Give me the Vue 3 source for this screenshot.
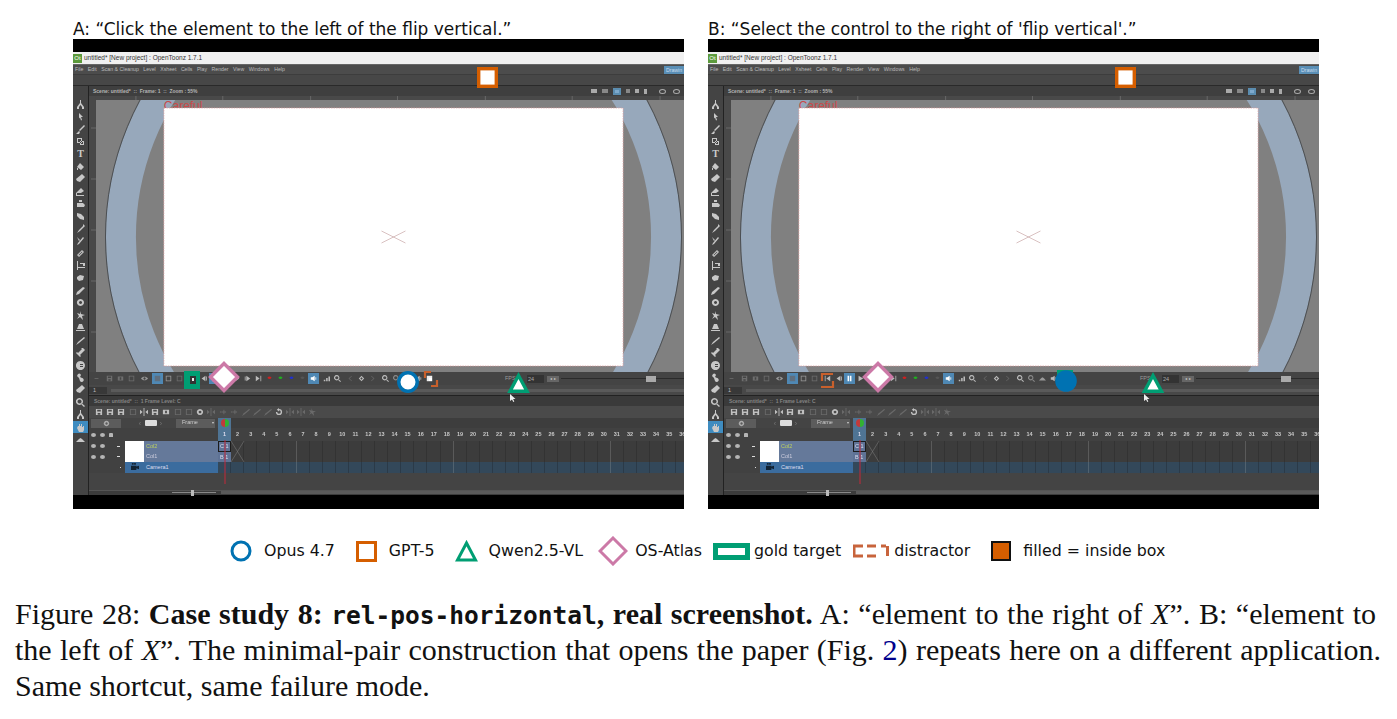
<template>
  <div class="page">
    <div class="panels">
      <section v-for="panel in panels" :key="panel.id" class="panel">
        <p class="prompt">{{ panel.prompt }}</p>
        <div class="shot">
          <div class="black top"></div>
          <div class="app">
            <div class="titlebar">
              <span class="logo">Ot</span>
              <span>untitled* [New project] : OpenToonz 1.7.1</span>
            </div>
            <div class="menubar">
              <span v-for="m in menus" :key="m">{{ m }}</span>
              <b class="room">Drawin</b>
            </div>
            <div class="toolbar"></div>
            <div class="workspace">
              <aside class="tools">
                <div v-for="(t, i) in tools" :key="i" class="tool" :class="{ on: t === 'hand' }">
                  <span v-if="t === 'T'" class="tool-t">T</span>
                  <svg v-else viewBox="0 0 9 9"><path :d="shapes[t]" fill-rule="evenodd" /></svg>
                </div>
              </aside>
              <div class="main">
                <div class="scenebar">
                  <span>Scene: untitled* &nbsp;::&nbsp; Frame: 1 &nbsp;::&nbsp; Zoom : 55%</span>
                  <div class="viewicons">
                    <i v-for="(v, i) in viewIcons" :key="i" :class="v"></i>
                  </div>
                </div>
                <div class="viewer">
                  <svg class="canvas" viewBox="88 96 596 276" preserveAspectRatio="none">
                    <rect x="88" y="96" width="596" height="276" fill="#494949" />
                    <rect x="95" y="100" width="589" height="272" fill="#808080" />
                    <circle cx="393" cy="237" r="273" fill="none" stroke="#97a8bb" stroke-width="30" />
                    <circle cx="393" cy="237" r="288.500" fill="none" stroke="#3d4248" stroke-width=".8" />
                    <rect x="88" y="96" width="7" height="276" fill="#494949" />
                    <rect x="95" y="96" width="589" height="4" fill="#494949" />
                    <path d="M135 96v4M222 96v4M310 96v4M397 96v4M485 96v4M572 96v4M660 96v4M90 128h5M90 179h5M90 230h5M90 281h5M90 332h5" stroke="#777" stroke-width=".7" />
                    <text x="163" y="110" class="safe">Careful</text>
                    <rect x="163" y="108" width="460" height="258" fill="#fff" stroke="#d99" stroke-width=".7" stroke-dasharray="1.500 1" />
                    <path d="M381 231l24 12M381 243l24-12" stroke="#c9a6a6" stroke-width=".7" />
                  </svg>
                </div>
                <div class="playbar">
                  <span v-for="(p, i) in playIcons" :key="i" class="cell" :class="{ sep: p.sep, active: p.active }">
                    <svg viewBox="0 0 9 9"><path :d="shapes[p.icon]" :fill="p.color || '#bbb'" fill-rule="evenodd" /></svg>
                  </span>
                  <span class="fps">FPS</span>
                  <span class="fpsval">24</span>
                  <span class="arrows">◂ ▸</span>
                  <span class="fpstrack"><i></i></span>
                </div>
                <div class="framebar">
                  <span class="framefield">1</span>
                  <span class="frametrack"></span>
                </div>
                <div class="xsheet">
                  <div class="xstatus">Scene: untitled* &nbsp;::&nbsp; 1 Frame Level: C</div>
                  <div class="xtools">
                    <span v-for="(x, i) in xIcons" :key="i" class="xcell" :class="{ dim: x.dim, sep: x.sep }">
                      <svg viewBox="0 0 9 9"><path :d="shapes[x.icon]" fill-rule="evenodd" /></svg>
                    </span>
                  </div>
                  <div class="hrow">
                    <div class="hleft">
                      <span class="hbtn"><svg viewBox="0 0 9 9"><path :d="shapes.gear" fill-rule="evenodd" /></svg></span>
                      <span class="chev">‹</span>
                      <span class="camadd"></span>
                      <span class="chev">›</span>
                      <span class="framemenu">Frame <em>▾</em></span>
                    </div>
                    <div class="hsel"><i></i></div>
                    <div class="hrest"></div>
                  </div>
                  <div class="nrow">
                    <div class="nleft">
                      <i class="dot"></i><i class="dot"></i><i class="lock"></i>
                    </div>
                    <div class="numbers">
                      <span v-for="n in 36" :key="n" :class="{ cur: n === 1 }">{{ n }}</span>
                    </div>
                  </div>
                  <div class="rows">
                    <div v-for="r in layers" :key="r.name" class="lrow" :class="r.kind">
                      <div class="lleft">
                        <i v-if="r.kind !== 'cam'" class="dot"></i>
                        <i v-if="r.kind !== 'cam'" class="dot"></i>
                        <i class="dash"></i>
                        <span class="thumb"><svg v-if="r.kind === 'cam'" viewBox="0 0 9 9"><path :d="shapes.cam" fill="#123" /></svg></span>
                        <span class="lname">{{ r.name }}</span>
                      </div>
                      <div class="lcells">
                        <span v-if="r.cell" class="firstcell">{{ r.cell }}&nbsp;1</span>
                      </div>
                    </div>
                    <svg class="playhead" viewBox="0 0 30 44"><path d="M13 0l13 21M26 0L13 21" stroke="#777" stroke-width=".6" transform="translate(0 1)" /><path d="M7 0v44" stroke="#c2283a" stroke-width="1" /></svg>
                  </div>
                  <div class="xgap"></div>
                  <div class="xbottom">
                    <span class="zoomtrack"><i></i></span>
                    <span class="hscroll"></span>
                  </div>
                </div>
              </div>
            </div>
          </div>
          <div class="black bottom"></div>
          <svg class="marks" :viewBox="`${panel.x} 39 611 470`">
            <template v-if="panel.id === 'a'">
              <rect x="184" y="371" width="16" height="18" fill="#009e73" />
              <rect x="190" y="376" width="6" height="8" fill="#333" />
              <rect x="192" y="378" width="2" height="3" fill="#eee" />
              <path d="M425 378v-6h6M437 380v6h-6" fill="none" stroke="#c8602c" stroke-width="2.200" />
              <rect x="429" y="378" width="3" height="3" fill="#fff" />
              <rect x="478.700" y="68.700" width="17.600" height="17.600" fill="#fff" stroke="#d55e00" stroke-width="3.400" />
              <path d="M224 363.500L237.500 377 224 390.500 210.500 377z" fill="#fff" stroke="#cc79a7" stroke-width="3.400" />
              <circle cx="408" cy="382" r="9.200" fill="#fff" stroke="#0072b2" stroke-width="3.400" />
              <path d="M518.500 375.500L527 391.300H510z" fill="#fff" stroke="#009e73" stroke-width="3.400" />
              <path d="M510 394v7l2-1.600 1.300 2.600 1-.5-1.200-2.500h2.400z" fill="#eee" />
            </template>
            <template v-else>
              <rect x="1057" y="370" width="16" height="8" fill="#009e73" />
              <path d="M822 381v-7h11M821 387h12v-6" fill="none" stroke="#c8602c" stroke-width="2.200" />
              <circle cx="1066" cy="381" r="10.800" fill="#0072b2" />
              <rect x="1116.700" y="68.700" width="17.600" height="17.600" fill="#fff" stroke="#d55e00" stroke-width="3.400" />
              <path d="M878 363.500L891.500 377 878 390.500 864.500 377z" fill="#fff" stroke="#cc79a7" stroke-width="3.400" />
              <path d="M1153 375.500L1161.500 391.300H1144.500z" fill="#fff" stroke="#009e73" stroke-width="3.400" />
              <path d="M1144 394v7l2-1.600 1.300 2.600 1-.5-1.200-2.500h2.400z" fill="#eee" />
            </template>
          </svg>
        </div>
      </section>
    </div>

    <div class="legend">
      <svg class="i-circle" viewBox="0 0 22 22"><circle cx="11" cy="11" r="9" fill="none" stroke="#0072b2" stroke-width="3" /></svg>
      <span class="l-opus">Opus 4.7</span>
      <svg class="i-square" viewBox="0 0 21 21"><rect x="1.500" y="1.500" width="18" height="18" fill="none" stroke="#d55e00" stroke-width="3" /></svg>
      <span class="l-gpt">GPT-5</span>
      <svg class="i-tri" viewBox="0 0 23 22"><path d="M11.500 3L20.500 20H2.500z" fill="none" stroke="#009e73" stroke-width="3" /></svg>
      <span class="l-qwen">Qwen2.5-VL</span>
      <svg class="i-dia" viewBox="0 0 30 30"><path d="M15 2L28 15 15 28 2 15z" fill="none" stroke="#cc79a7" stroke-width="3" /></svg>
      <span class="l-os">OS-Atlas</span>
      <svg class="i-gold" viewBox="0 0 37 17"><rect x="2.500" y="2.500" width="32" height="12" fill="#fff" stroke="#009e73" stroke-width="5" /></svg>
      <span class="l-gold">gold target</span>
      <svg class="i-dist" viewBox="0 0 36 14"><path d="M1 7V2h9M14 2h9M28 2h5M1 7v5h9M14 12h9M34.500 2v10" fill="none" stroke="#c8643c" stroke-width="3" /></svg>
      <span class="l-dist">distractor</span>
      <svg class="i-fill" viewBox="0 0 20 20"><rect x="1" y="1" width="18" height="18" fill="#d55e00" stroke="#111" stroke-width="2" /></svg>
      <span class="l-fill">filled = inside box</span>
    </div>

    <div class="caption">
      <div class="line l1">Figure 28: <b>Case study 8: <code>rel-pos-horizontal</code>, real screenshot.</b> A: “element to the right of <i>X</i>”. B: “element to</div>
      <div class="line l2">the left of <i>X</i>”. The minimal-pair construction that opens the paper (Fig. <span class="ref">2</span>) repeats here on a different application.</div>
      <div class="line l3">Same shortcut, same failure mode.</div>
    </div>
  </div>
</template>

<script setup>
const panels = [
  { id: 'a', x: 73, prompt: 'A: “Click the element to the left of the flip vertical.”' },
  { id: 'b', x: 708, prompt: "B: “Select the control to the right of 'flip vertical'.”" }
]

const menus = ['File', 'Edit', 'Scan & Cleanup', 'Level', 'Xsheet', 'Cells', 'Play', 'Render', 'View', 'Windows', 'Help']

const shapes = {
  anim: 'M4 0h1v3l3 4v2H6V7L4.500 5 3 7v2H1V7l3-4z',
  arrow: 'M3 1l4 4H5l1 3-1 .5-1-3-1 1z',
  brush: 'M8 0l1 1-5 5-1-1zM3 6l1 1-1 2H0z',
  copy: 'M1 1h5v5H1zM2 2v3h3V2zM4 4h4v4H4zM5 5v2h2V5z',
  fill: 'M4 1l4 4-3 3-4-3zM1 6h1v2H1z',
  bucket: 'M6 0l3 3-5 5-3-1-1-2z',
  eraser: 'M5 1l3 3-3 2H1v2h7v1H0V6z',
  blob: 'M1 4h6l2 2-1 2H1zM3 1h3v2H3z',
  smudge: 'M1 1l4 1 3 3v3L4 7 1 4z',
  drop: 'M7 0l2 2-1 1-4 4-3 2 2-3 4-4z',
  pick: 'M7 1l1 1-5 6-2 1 1-2zM1 1l3 3-1 1z',
  tape: 'M6 1l2 2-5 5-2-2zM6 2.500L2.500 6 3 6.500 6.500 3z',
  crop: 'M1 0h1v6h7v1H2v2H1zM4 2h5v3H7V3H4z',
  cut: 'M1 3l3-2 4 1-1 4-4 1-2-2z',
  pen: 'M7 1l2 1-6 6-3 1 1-3z',
  ring: 'M4.500 1a3.500 3.500 0 1 1-.1 0zM4.500 3a1.500 1.500 0 1 0 .1 0z',
  star: 'M4 0l1 3 4 1-3 1 1 4-3-3-3 2 2-3-2-3 3 1z',
  iron: 'M3 1h3l2 5H1zM0 7h9v1H0z',
  line: 'M8 1l1 1-6 5-3 2 2-3z',
  bone: 'M7 0l2 2-1 1-4 4 1 1-1 1-2-2L0 5l1-1 1 1 4-4-1-1z',
  swirl: 'M4.500 0a4.500 4.500 0 1 1-.1 0zM7 3H4v1h3zM7 5H4v1h3z',
  knot: 'M2 1a2 2 0 0 1 3 1l-1 2 2 1a2 2 0 1 1-2 3L3 5 1 3z',
  mag: 'M3.500 0a3.500 3.500 0 1 1-.1 0zM3.500 1.500a2 2 0 1 0 .1 0zM6 5.500l3 2.500-1 1-3-3z',
  hand: 'M2 3h1V1h1v2h1V1h1v3h1V3h1v4L7 9H3L1 5z',
  mount: 'M0 7l3-3 1.500-1L6 4l3 3z',
  bar: 'M2 4h5v1H2z',
  disk: 'M1 1h7v7H1zM2.500 2v2h4V2zM3 5.500v2h3v-2z',
  camera: 'M1 2h7v5H1zM3.500 3v3h2V3z',
  grid: 'M1 1h7v7H1zM2 2v5h5V2z',
  eye: 'M0 4.500C2 1.500 7 1.500 9 4.500 7 7.500 2 7.500 0 4.500zM4.500 3a1.500 1.500 0 1 0 .1 0z',
  solid: 'M1 1h7v7H1z',
  first: 'M1 1h1v7H1zM8 1v7L3 4.500z',
  prev: 'M7 1v7L2 4.500zM8 2h1v5H8z',
  pause: 'M2 1h2v7H2zM5 1h2v7H5z',
  play: 'M2 1l6 3.500L2 8z',
  next: 'M1 2h1v5H1zM3 1l5 3.500L3 8z',
  last: 'M1 1l5 3.500L1 8zM7 1h1v7H7z',
  dot: 'M4.500 2a2.500 1.500 0 1 1-.1 0z',
  sound: 'M1 3h2l3-2v7L3 6H1zM7 3h1v3H7z',
  bars: 'M1 6h2v2H1zM4 4h2v4H4zM7 2h2v6H7z',
  left: 'M6 1v1L3 4.500 6 7v1L2 4.500z',
  right: 'M3 1v1l3 2.500L3 7v1l4-3.500z',
  diamond: 'M4.500 1L8 4.500 4.500 8 1 4.500zM4.500 3L3 4.500 4.500 6 6 4.500z',
  gear: 'M4.500 1a3.500 3.500 0 1 1-.1 0zM4.500 3a1.500 1.500 0 1 0 .1 0z',
  plus: 'M1 4h2v1H1zM5 2h1v2h2v1H6v2H5V5H3.500V4H5z',
  undo: 'M4.500 1a3.500 3.500 0 1 1-3.500 3.500h1.500a2 2 0 1 0 2-2V4L2 2l2.500-2z',
  cam: 'M0 3h6v5H0zM6 4l3-1v4L6 6zM1 0h2v2H1zM3.500 0h2v2h-2z',
  flip: 'M4 0h1v9H4zM0 2l3 2.500L0 7zM9 2v5L6 4.500z'
}

const tools = ['anim', 'arrow', 'brush', 'copy', 'T', 'fill', 'bucket', 'eraser', 'blob', 'smudge', 'drop', 'pick', 'tape', 'crop', 'cut', 'pen', 'ring', 'star', 'iron', 'line', 'bone', 'swirl', 'knot', 'bucket', 'mag', 'anim', 'hand', 'mount']

const viewIcons = ['box', 'box dim', 'act', 'small dim', 'small', 'two', 'ring', 'ring']

const dim = '#6e6e6e'
const playIcons = [
  { icon: 'bar', color: dim },
  { icon: 'disk', color: dim, sep: true },
  { icon: 'camera', color: dim },
  { icon: 'grid', color: dim },
  { icon: 'eye', color: '#999', sep: true },
  { icon: 'solid', color: '#5f6f7f', sep: true, active: true },
  { icon: 'grid', color: '#999' },
  { icon: 'grid', color: dim },
  { icon: 'first', sep: true },
  { icon: 'prev' },
  { icon: 'pause', color: '#fff', active: true },
  { icon: 'play' },
  { icon: 'next' },
  { icon: 'next' },
  { icon: 'last' },
  { icon: 'dot', color: '#d02020' },
  { icon: 'dot', color: '#20b020' },
  { icon: 'dot', color: '#2030d0' },
  { icon: 'dot', color: '#555' },
  { icon: 'sound', color: '#fff', active: true },
  { icon: 'bars', sep: true },
  { icon: 'mag' },
  { icon: 'left', color: dim, sep: true },
  { icon: 'diamond' },
  { icon: 'right', color: dim },
  { icon: 'mag', sep: true },
  { icon: 'mag', color: '#888' },
  { icon: 'mount', color: '#999' },
  { icon: 'sound' },
  { icon: 'solid', color: '#eee' }
]

const xIcons = [
  { icon: 'disk' }, { icon: 'disk' }, { icon: 'disk' },
  { icon: 'grid', dim: true, sep: true }, { icon: 'flip' }, { icon: 'disk' }, { icon: 'camera' },
  { icon: 'grid', dim: true, sep: true }, { icon: 'grid', dim: true }, { icon: 'gear' }, { icon: 'flip', dim: true },
  { icon: 'plus', dim: true, sep: true }, { icon: 'plus', dim: true }, { icon: 'line', dim: true, sep: true },
  { icon: 'line', dim: true }, { icon: 'line', dim: true }, { icon: 'undo' }, { icon: 'flip', dim: true },
  { icon: 'flip', dim: true }, { icon: 'star', dim: true }
]

const layers = [
  { name: 'Col2', kind: 'col sel', cell: 'C' },
  { name: 'Col1', kind: 'col', cell: 'B' },
  { name: 'Camera1', kind: 'cam' }
]
</script>

<style>
html, body { background: #fff; }
</style>

<style scoped>
.page {
  width: 1397px;
  height: 719px;
  overflow: hidden;
  background: #fff;
  color: #111;
}

.panels {
  display: flex;
  gap: 24px;
  padding: 19px 0 0 73px;
}

.panel {
  width: 611px;
}

.prompt {
  margin: 0;
  height: 20px;
  font: 17px/20px "DejaVu Sans", sans-serif;
  white-space: nowrap;
}

.shot {
  position: relative;
  width: 611px;
  height: 470px;
  overflow: hidden;
  background: #000;
}

.black {
  background: #000;
}
.black.top { height: 13px; }
.black.bottom { height: 14px; }

.marks {
  position: absolute;
  left: 0;
  top: 0;
  width: 611px;
  height: 470px;
}

.app {
  height: 443px;
  display: flex;
  flex-direction: column;
  background: #444;
  color: #bbb;
  font: 5.500px/1 "Liberation Sans", sans-serif;
  filter: blur(0.45px);
}

.titlebar {
  height: 12px;
  display: flex;
  align-items: center;
  gap: 2px;
  background: #f0f0f0;
  color: #333;
  font-size: 6.500px;
}

.logo {
  width: 9px;
  height: 9px;
  background: #5c9a3c;
  color: #fff;
  font-size: 6px;
  line-height: 9px;
  text-align: center;
}

.menubar {
  height: 10px;
  display: flex;
  align-items: center;
  gap: 4.500px;
  padding-left: 2px;
  background: #4c4c4c;
  border-top: 1px solid #666;
  box-sizing: border-box;
  font-size: 5.200px;
}

.room {
  margin-left: auto;
  width: 20px;
  height: 8px;
  font-weight: 400;
  line-height: 8px;
  padding-left: 2px;
  box-sizing: border-box;
  background: #5a8fb6;
  color: #cde;
}

.toolbar {
  height: 12px;
  box-sizing: border-box;
  background: #474747;
  border-top: 1px solid #3d3d3d;
  border-bottom: 1px solid #2a2a2a;
}

.workspace {
  flex: 1;
  display: flex;
  min-height: 0;
}

.tools {
  width: 15px;
  flex: none;
  padding-top: 12px;
  background: #444;
  border-right: 1px solid #222;
  box-sizing: content-box;
  display: flex;
  flex-direction: column;
}

.tool {
  height: 12.430px;
  display: flex;
  align-items: center;
  justify-content: center;
  flex: none;
}

.tool svg {
  width: 9px;
  height: 9px;
  fill: #c8c8c8;
}

.tool.on {
  background: #3f8cc0;
}

.tool-t {
  font: bold 10px/1 "Liberation Serif", serif;
  color: #ccc;
}

.main {
  flex: 1;
  min-width: 0;
  display: flex;
  flex-direction: column;
}

.scenebar {
  height: 10px;
  flex: none;
  display: flex;
  align-items: center;
  padding-left: 4px;
  background: #3f3f3f;
  color: #b5b5b5;
  font-weight: 700;
  font-size: 5px;
  position: relative;
}

.viewicons {
  position: absolute;
  left: 502px;
  top: 0;
  height: 10px;
  display: flex;
  align-items: center;
  gap: 5px;
}

.viewicons i {
  display: block;
  width: 6px;
  height: 4px;
  background: #aaa;
}
.viewicons i.dim { background: #888; }
.viewicons i.small { width: 4px; }
.viewicons i.act { width: 8px; height: 7px; background: #7ea9cc; border: 2px solid #5b8db0; box-sizing: border-box; }
.viewicons i.two { width: 3px; height: 5px; }
.viewicons i.ring { width: 7px; height: 5px; background: none; border: 1px solid #aaa; border-radius: 50%; box-sizing: border-box; margin-left: 2px; }
.viewicons i.two + .ring { margin-left: 7px; }

.viewer {
  height: 276px;
  flex: none;
}

.canvas {
  display: block;
  width: 100%;
  height: 276px;
}

.safe {
  font: 12px "Liberation Sans", sans-serif;
  fill: #c94a4a;
}

.playbar {
  height: 13px;
  flex: none;
  display: flex;
  align-items: center;
  padding-left: 2px;
  background: #444;
  color: #999;
}

.cell {
  width: 11px;
  height: 11px;
  flex: none;
  display: flex;
  align-items: center;
  justify-content: center;
}
.cell svg { width: 7px; height: 7px; }
.cell.sep { margin-left: 2px; }
.cell.active { background: #4f88b4; }

.fps {
  margin-left: 70px;
  width: 22px;
  color: #999;
}

.fpsval {
  width: 16px;
  height: 8px;
  padding-left: 1px;
  line-height: 8px;
  background: #333;
  color: #aaa;
}

.arrows {
  margin-left: 3px;
  width: 12px;
  height: 6px;
  background: #666;
  font-size: 4px;
  line-height: 6px;
  text-align: center;
  color: #ccc;
}

.fpstrack {
  flex: 1;
  height: 1px;
  margin-left: 2px;
  background: #2b2b2b;
  position: relative;
}

.fpstrack i {
  position: absolute;
  left: 85px;
  top: -2.500px;
  width: 10px;
  height: 6px;
  background: #aaa;
}

.framebar {
  height: 11px;
  flex: none;
  display: flex;
  align-items: center;
  background: #484848;
  border-bottom: 1px solid #222;
  box-sizing: border-box;
}

.framefield {
  width: 18px;
  height: 7px;
  padding-left: 4px;
  box-sizing: border-box;
  background: #383838;
  color: #bbb;
  line-height: 7px;
}

.frametrack {
  flex: 1;
  height: 3px;
  margin-left: 4px;
  background: #5a5a5a;
}

.xsheet {
  flex: 1;
  min-height: 0;
  display: flex;
  flex-direction: column;
}

.xstatus {
  height: 10px;
  flex: none;
  padding-left: 5px;
  line-height: 10px;
  background: #3a3a3a;
  color: #858585;
  font-weight: 700;
  font-size: 5px;
}

.xtools {
  height: 12px;
  flex: none;
  display: flex;
  align-items: center;
  padding-left: 4px;
  background: #4a4a4a;
}

.xcell {
  width: 11px;
  height: 11px;
  flex: none;
  display: flex;
  align-items: center;
  justify-content: center;
}
.xcell svg { width: 8px; height: 8px; fill: #c0c0c0; }
.xcell.dim svg { fill: #6a6a6a; }
.xcell.sep { margin-left: 1px; }

.hrow {
  height: 10px;
  flex: none;
  display: flex;
  background: #3d3d3d;
}

.hleft {
  width: 129px;
  display: flex;
  align-items: center;
  padding-left: 2px;
  box-sizing: border-box;
  background: #444;
}

.hbtn {
  width: 30px;
  height: 9px;
  display: flex;
  align-items: center;
  justify-content: center;
  background: #5c5c5c;
}
.hbtn svg { width: 7px; height: 7px; fill: #aaa; }

.chev {
  width: 20px;
  text-align: right;
  color: #777;
  font-size: 7px;
}

.camadd {
  width: 12px;
  height: 6px;
  margin-left: 4px;
  background: #ddd;
  border-radius: 1px;
}

.chev + .camadd + .chev {
  width: 5px;
}

.framemenu {
  margin-left: 14px;
  width: 39px;
  height: 9px;
  padding-left: 6px;
  box-sizing: border-box;
  display: flex;
  justify-content: space-between;
  align-items: center;
  background: #5c5c5c;
  color: #ccc;
}
.framemenu em { font-style: normal; font-size: 4px; padding-right: 1px; }

.hsel {
  width: 13px;
  background: #4f7494;
  display: flex;
  align-items: center;
  justify-content: center;
}

.hsel i {
  width: 8px;
  height: 8px;
  border-radius: 50%;
  background: linear-gradient(90deg, #c23a3a 50%, #32b232 50%);
}

.hrest {
  flex: 1;
}

.nrow {
  height: 13px;
  flex: none;
  display: flex;
  background: #414141;
}

.nleft {
  width: 129px;
  flex: none;
  display: flex;
  align-items: center;
  gap: 4px;
  padding-left: 2px;
  box-sizing: border-box;
}

.dot {
  display: block;
  width: 5px;
  height: 4px;
  flex: none;
  border-radius: 50%;
  background: #b5b5b5;
}

.lock {
  width: 4px;
  height: 4px;
  background: #b5b5b5;
  border-radius: 1px 1px 0 0;
}

.numbers {
  display: flex;
  color: #c8c8c8;
  font-weight: 700;
  font-size: 5.500px;
  align-items: center;
}

.numbers span {
  width: 13.090px;
  flex: none;
  text-align: center;
}

.numbers .cur {
  height: 13px;
  line-height: 13px;
  background: #4f7494;
  color: #dde;
}

.rows {
  position: relative;
  flex: none;
}

.lrow {
  height: 10.500px;
  display: flex;
}

.lleft {
  width: 129px;
  flex: none;
  display: flex;
  align-items: center;
  gap: 4px;
  padding-left: 2px;
  box-sizing: border-box;
  background: #414141;
}

.thumb {
  width: 19px;
  height: 100%;
  margin-left: auto;
  flex: none;
  background: #fff;
  display: flex;
  align-items: center;
  justify-content: center;
}
.thumb svg { width: 8px; height: 8px; }

.lname {
  width: 74px;
  height: 100%;
  margin-left: -4px;
  padding-left: 2px;
  box-sizing: border-box;
  display: flex;
  align-items: center;
  flex: none;
  background: #65799a;
  color: #ccd;
}

.dash {
  width: 3px;
  height: 1px;
  margin-left: 4px;
  background: #ddd;
}

.lrow .lleft .dot + .dash {
  margin-left: 8px;
}

.col.sel .lname { color: #bcd060; }

.cam .lname { background: #3b6c9e; color: #dde; }
.cam .dash { margin-left: 29px; }
.cam .thumb { background: #3b6c9e; }

.lcells {
  flex: 1;
  background:
    repeating-linear-gradient(90deg, transparent 0 78px, #5a5a5a 78px 78.540px),
    repeating-linear-gradient(90deg, transparent 0 12.090px, #333 12.090px 13.090px) #3c3c3c;
}

.cam .lcells {
  background:
    repeating-linear-gradient(90deg, transparent 0 78px, #51626f 78px 78.540px),
    repeating-linear-gradient(90deg, transparent 0 12.090px, #2b3a48 12.090px 13.090px) #33485a;
}

.firstcell {
  display: block;
  width: 13px;
  height: 100%;
  box-sizing: border-box;
  padding-left: 2px;
  line-height: 10px;
  background: #5f7396;
  color: #dde;
}

.sel .firstcell {
  outline: 1px solid #1c1c1c;
  outline-offset: -1px;
}

.playhead {
  position: absolute;
  left: 129px;
  top: -1px;
  width: 30px;
  height: 44px;
}

.xgap {
  height: 17px;
  flex: none;
  background: #444;
  border-bottom: 1px solid #555;
}

.xbottom {
  flex: 1;
  display: flex;
  align-items: center;
  background: #3c3c3c;
  padding-left: 83px;
}

.zoomtrack {
  width: 44px;
  height: 1px;
  background: #888;
  position: relative;
  flex: none;
}

.zoomtrack i {
  position: absolute;
  left: 19px;
  top: -2.500px;
  width: 3px;
  height: 6px;
  background: #bbb;
}

.hscroll {
  flex: 1;
  height: 3px;
  margin-left: 5px;
  background: #5a5a5a;
}

.legend {
  height: 24px;
  margin-top: 30px;
  display: flex;
  align-items: center;
  padding-left: 230px;
  font: 15.800px/24px "DejaVu Sans", sans-serif;
  white-space: nowrap;
}

.legend svg { flex: none; display: block; }

.i-circle { width: 22px; height: 22px; }
.l-opus { margin-left: 12px; }
.i-square { width: 21px; height: 21px; margin-left: 21px; }
.l-gpt { margin-left: 12px; }
.i-tri { width: 23px; height: 22px; margin-left: 20px; }
.l-qwen { margin-left: 11px; }
.i-dia { width: 30px; height: 30px; margin-left: 15px; }
.l-os { margin-left: 7px; }
.i-gold { width: 37px; height: 17px; margin-left: 11px; }
.l-gold { margin-left: 4px; }
.i-dist { width: 36px; height: 14px; margin-left: 12px; }
.l-dist { margin-left: 5px; }
.i-fill { width: 20px; height: 20px; margin-left: 21px; }
.l-fill { margin-left: 12px; }

.caption {
  margin-top: 33px;
  padding-left: 15px;
  font: 30px/36px "Liberation Serif", serif;
  color: #111;
}

.line {
  white-space: nowrap;
}

.l1,
.l2 {
  white-space: normal;
  text-align: justify;
  text-align-last: justify;
}

.l1 { width: 1361px; }
.l2 { width: 1366px; }

.caption code {
  font: bold 24.500px "DejaVu Sans Mono", monospace;
}

.ref {
  color: #00008b;
}
</style>
